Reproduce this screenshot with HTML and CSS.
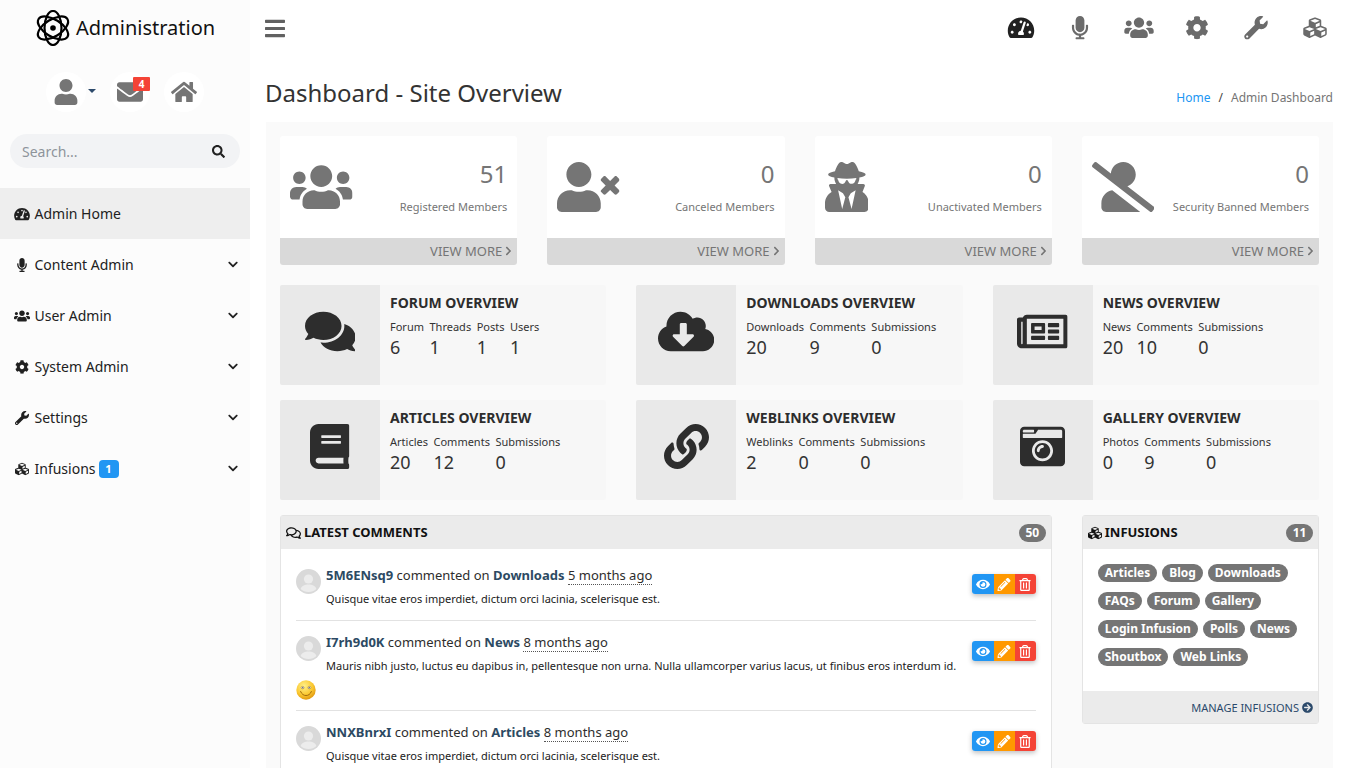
FILE: index.html
```html
<!DOCTYPE html>
<html lang="en">
<head>
<meta charset="utf-8">
<title>Administration</title>
<link rel="stylesheet" href="styles.css">
</head>
<body>
<svg class="sprite" xmlns="http://www.w3.org/2000/svg">
<defs>
<symbol id="i-bars" viewBox="0 0 448 512"><path d="M16 132h416c8.837 0 16-7.163 16-16V76c0-8.837-7.163-16-16-16H16C7.163 60 0 67.163 0 76v40c0 8.837 7.163 16 16 16zm0 160h416c8.837 0 16-7.163 16-16v-40c0-8.837-7.163-16-16-16H16c-8.837 0-16 7.163-16 16v40c0 8.837 7.163 16 16 16zm0 160h416c8.837 0 16-7.163 16-16v-40c0-8.837-7.163-16-16-16H16c-8.837 0-16 7.163-16 16v40c0 8.837 7.163 16 16 16z"/></symbol>
<symbol id="i-user" viewBox="0 0 448 512"><path d="M224 256c70.7 0 128-57.3 128-128S294.7 0 224 0 96 57.3 96 128s57.3 128 128 128zm89.6 32h-16.7c-22.2 10.2-46.9 16-72.9 16s-50.6-5.8-72.9-16h-16.7C60.2 288 0 348.2 0 422.4V464c0 26.5 21.5 48 48 48h352c26.5 0 48-21.5 48-48v-41.6c0-74.2-60.2-134.4-134.4-134.4z"/></symbol>
<symbol id="i-envelope" viewBox="0 0 512 512"><path d="M502.3 190.8c3.9-3.1 9.7-.2 9.7 4.7V400c0 26.5-21.5 48-48 48H48c-26.5 0-48-21.5-48-48V195.6c0-5 5.7-7.8 9.7-4.7 22.4 17.4 52.1 39.5 154.1 113.6 21.1 15.4 56.7 47.8 92.2 47.6 35.7.3 72-32.8 92.3-47.6 102-74.1 131.6-96.3 154-113.7zM256 320c23.2.4 56.6-29.2 73.4-41.4 132.7-96.3 142.8-104.7 173.4-128.7 5.8-4.5 9.2-11.5 9.2-18.9v-19c0-26.5-21.5-48-48-48H48C21.5 64 0 85.5 0 112v19c0 7.4 3.4 14.3 9.2 18.9 30.6 23.9 40.7 32.4 173.4 128.7 16.8 12.2 50.2 41.8 73.4 41.4z"/></symbol>
<symbol id="i-home" viewBox="0 0 576 512"><path d="M280.37 148.26L96 300.11V464a16 16 0 0 0 16 16l112.06-.29a16 16 0 0 0 15.92-16V368a16 16 0 0 1 16-16h64a16 16 0 0 1 16 16v95.64a16 16 0 0 0 16 16.05L464 480a16 16 0 0 0 16-16V300L295.67 148.26a12.19 12.19 0 0 0-15.3 0zM571.6 251.47L488 182.56V44.05a12 12 0 0 0-12-12h-56a12 12 0 0 0-12 12v72.61L318.47 43a48 48 0 0 0-61 0L4.34 251.47a12 12 0 0 0-1.6 16.9l25.5 31A12 12 0 0 0 45.15 301l235.22-193.74a12.19 12.19 0 0 1 15.3 0L530.9 301a12 12 0 0 0 16.9-1.6l25.5-31a12 12 0 0 0-1.7-16.93z"/></symbol>
<symbol id="i-search" viewBox="0 0 512 512"><path d="M505 442.7L405.3 343c-4.5-4.5-10.6-7-17-7H372c27.6-35.3 44-79.7 44-128C416 93.1 322.9 0 208 0S0 93.1 0 208s93.1 208 208 208c48.3 0 92.7-16.4 128-44v16.3c0 6.4 2.5 12.5 7 17l99.7 99.7c9.4 9.4 24.6 9.4 33.9 0l28.3-28.3c9.4-9.4 9.4-24.6.1-34zM208 336c-70.7 0-128-57.2-128-128 0-70.7 57.2-128 128-128 70.7 0 128 57.2 128 128 0 70.7-57.2 128-128 128z"/></symbol>
<symbol id="i-tach" viewBox="0 0 576 512"><path d="M288 32C128.94 32 0 160.94 0 320c0 52.8 14.25 102.26 39.06 144.8 5.61 9.62 16.3 15.2 27.44 15.2h443c11.14 0 21.83-5.58 27.44-15.2C561.75 422.26 576 372.8 576 320c0-159.06-128.94-288-288-288zm0 64c14.71 0 26.58 10.13 30.32 23.65-1.11 2.26-2.64 4.23-3.45 6.67l-9.22 27.67c-5.13 3.49-10.97 6.01-17.64 6.01-17.67 0-32-14.33-32-32S270.33 96 288 96zM96 384c-17.67 0-32-14.33-32-32s14.33-32 32-32 32 14.33 32 32-14.33 32-32 32zm48-160c-17.67 0-32-14.33-32-32s14.33-32 32-32 32 14.33 32 32-14.33 32-32 32zm246.77-72.41l-61.33 184C343.13 347.33 352 364.54 352 384c0 11.72-3.38 22.55-8.88 32H232.88c-5.5-9.45-8.88-20.28-8.88-32 0-33.94 26.5-61.43 59.9-63.59l61.34-184.01c4.17-12.56 17.73-19.45 30.36-15.17 12.57 4.19 19.35 17.79 15.17 30.36zm14.66 57.2l15.52-46.55c3.47-1.29 7.13-2.23 11.05-2.23 17.67 0 32 14.33 32 32s-14.33 32-32 32c-11.38-.01-20.89-6.28-26.57-15.22zM480 384c-17.67 0-32-14.33-32-32s14.33-32 32-32 32 14.33 32 32-14.33 32-32 32z"/></symbol>
<symbol id="i-mic" viewBox="0 0 352 512"><path d="M176 352c53.02 0 96-42.98 96-96V96c0-53.02-42.98-96-96-96S80 42.98 80 96v160c0 53.02 42.98 96 96 96zm160-160h-16c-8.84 0-16 7.16-16 16v48c0 74.8-64.49 134.82-140.79 127.38C96.71 376.89 48 317.11 48 250.3V208c0-8.84-7.16-16-16-16H16c-8.84 0-16 7.16-16 16v40.16c0 89.64 63.97 169.55 152 181.69V464H96c-8.84 0-16 7.16-16 16v16c0 8.84 7.16 16 16 16h160c8.84 0 16-7.16 16-16v-16c0-8.84-7.16-16-16-16h-56v-33.77C285.71 418.47 352 344.9 352 256v-48c0-8.84-7.16-16-16-16z"/></symbol>
<symbol id="i-users" viewBox="0 0 640 512"><path d="M96 224c35.3 0 64-28.7 64-64s-28.7-64-64-64-64 28.7-64 64 28.7 64 64 64zm448 0c35.3 0 64-28.7 64-64s-28.7-64-64-64-64 28.7-64 64 28.7 64 64 64zm32 32h-64c-17.6 0-33.5 7.1-45.1 18.6 40.3 22.1 68.9 62 75.1 109.4h66c17.7 0 32-14.3 32-32v-32c0-35.3-28.7-64-64-64zm-256 0c61.9 0 112-50.1 112-112S381.9 32 320 32 208 82.1 208 144s50.1 112 112 112zm76.8 32h-8.3c-20.8 10-43.9 16-68.5 16s-47.6-6-68.5-16h-8.3C179.6 288 128 339.6 128 403.2V432c0 26.5 21.5 48 48 48h288c26.5 0 48-21.5 48-48v-28.8c0-63.6-51.6-115.2-115.2-115.2zm-223.7-13.4C161.5 263.1 145.6 256 128 256H64c-35.3 0-64 28.7-64 64v32c0 17.7 14.3 32 32 32h65.9c6.3-47.4 34.9-87.3 75.2-109.4z"/></symbol>
<symbol id="i-cog" viewBox="0 0 512 512"><path d="M487.4 315.7l-42.6-24.6c4.3-23.2 4.3-47 0-70.2l42.6-24.6c4.9-2.8 7.1-8.6 5.5-14-11.1-35.6-30-67.8-54.7-94.6-3.8-4.1-10-5.1-14.8-2.3L380.8 110c-17.9-15.4-38.5-27.3-60.8-35.1V25.8c0-5.6-3.9-10.5-9.4-11.7-36.7-8.2-74.3-7.8-109.2 0-5.5 1.2-9.4 6.1-9.4 11.7V75c-22.2 7.9-42.8 19.8-60.8 35.1L88.7 85.5c-4.9-2.8-11-1.9-14.8 2.3-24.7 26.7-43.6 58.9-54.7 94.6-1.7 5.4.6 11.2 5.5 14L67.3 221c-4.3 23.2-4.3 47 0 70.2l-42.6 24.6c-4.9 2.8-7.1 8.6-5.5 14 11.1 35.6 30 67.8 54.7 94.6 3.8 4.1 10 5.1 14.8 2.3l42.6-24.6c17.9 15.4 38.5 27.3 60.8 35.1v49.2c0 5.6 3.9 10.5 9.4 11.7 36.7 8.2 74.3 7.8 109.2 0 5.5-1.2 9.4-6.1 9.4-11.7v-49.2c22.2-7.9 42.8-19.8 60.8-35.1l42.6 24.6c4.9 2.8 11 1.9 14.8-2.3 24.7-26.7 43.6-58.9 54.7-94.6 1.5-5.5-.7-11.3-5.6-14.1zM256 336c-44.1 0-80-35.9-80-80s35.9-80 80-80 80 35.9 80 80-35.9 80-80 80z"/></symbol>
<symbol id="i-wrench" viewBox="0 0 512 512"><path d="M507.73 109.1c-2.24-9.03-13.54-12.09-20.12-5.51l-74.36 74.36-67.88-11.31-11.31-67.88 74.36-74.36c6.62-6.62 3.43-17.9-5.66-20.16-47.38-11.74-99.55.91-136.58 37.93-39.64 39.64-50.55 97.1-34.05 147.2L18.74 402.76c-24.99 24.99-24.99 65.51 0 90.5 24.99 24.99 65.51 24.99 90.5 0l213.21-213.21c50.12 16.71 107.47 5.68 147.37-34.22 37.07-37.07 49.7-89.32 37.91-136.73zM64 472c-13.25 0-24-10.75-24-24 0-13.26 10.75-24 24-24s24 10.74 24 24c0 13.25-10.75 24-24 24z"/></symbol>
<symbol id="i-cubes" viewBox="0 0 512 512"><path d="M488.6 250.2L392 214V105.5c0-15-9.3-28.4-23.4-33.7l-100-37.5c-8.1-3.1-17.1-3.1-25.3 0l-100 37.5c-14.1 5.3-23.4 18.7-23.4 33.7V214l-96.6 36.2C9.3 255.5 0 268.9 0 283.9V394c0 13.6 7.7 26.1 19.9 32.2l100 50c10.1 5.1 22.1 5.1 32.2 0l103.9-52 103.9 52c10.1 5.1 22.1 5.1 32.2 0l100-50c12.2-6.1 19.9-18.6 19.9-32.2V283.9c0-15-9.3-28.4-23.4-33.7zM358 214.8l-85 31.9v-68.2l85-37v73.3zM154 104.1l102-38.2 102 38.2v.6l-102 41.4-102-41.4v-.6zm84 291.1l-85 42.5v-79.1l85-38.8v75.4zm0-112l-102 41.4-102-41.4v-.6l102-38.2 102 38.2v.6zm240 112l-85 42.5v-79.1l85-38.8v75.4zm0-112l-102 41.4-102-41.4v-.6l102-38.2 102 38.2v.6z"/></symbol>
<symbol id="i-chev-d" viewBox="0 0 448 512"><path d="M207.029 381.476L12.686 187.132c-9.373-9.373-9.373-24.569 0-33.941l22.667-22.667c9.357-9.357 24.522-9.375 33.901-.04L224 284.505l154.745-154.021c9.379-9.335 24.544-9.317 33.901.04l22.667 22.667c9.373 9.373 9.373 24.569 0 33.941L240.971 381.476c-9.373 9.372-24.569 9.372-33.942 0z"/></symbol>
<symbol id="i-chev-r" viewBox="0 0 320 512"><path d="M285.476 272.971L91.132 467.314c-9.373 9.373-24.569 9.373-33.941 0l-22.667-22.667c-9.357-9.357-9.375-24.522-.04-33.901L188.505 256 34.484 101.255c-9.335-9.379-9.317-24.544.04-33.901l22.667-22.667c9.373-9.373 24.569-9.373 33.941 0L285.475 239.03c9.373 9.372 9.373 24.568.001 33.941z"/></symbol>
<symbol id="i-user-times" viewBox="0 0 640 512"><path d="M589.6 240l45.6-45.6c6.3-6.3 6.3-16.5 0-22.8l-22.8-22.8c-6.3-6.3-16.5-6.3-22.8 0L544 194.4l-45.6-45.6c-6.3-6.3-16.5-6.3-22.8 0l-22.8 22.8c-6.3 6.3-6.3 16.5 0 22.8l45.6 45.6-45.6 45.6c-6.3 6.3-6.3 16.5 0 22.8l22.8 22.8c6.3 6.3 16.5 6.3 22.8 0l45.6-45.6 45.6 45.6c6.3 6.3 16.5 6.3 22.8 0l22.8-22.8c6.3-6.3 6.3-16.5 0-22.8L589.6 240zM224 256c70.7 0 128-57.3 128-128S294.7 0 224 0 96 57.3 96 128s57.3 128 128 128zm89.6 32h-16.7c-22.2 10.2-46.9 16-72.9 16s-50.6-5.8-72.9-16h-16.7C60.2 288 0 348.2 0 422.4V464c0 26.5 21.5 48 48 48h352c26.5 0 48-21.5 48-48v-41.6c0-74.2-60.2-134.4-134.4-134.4z"/></symbol>
<symbol id="i-user-secret" viewBox="0 0 448 512"><path d="M383.9 308.3l23.9-62.6c4-10.5-3.7-21.7-15-21.7h-58.5c11-18.9 17.8-40.6 17.8-64v-.3c39.2-7.8 64-19.1 64-31.7 0-13.3-27.3-25.1-70.1-33-9.2-32.8-27-65.8-40.6-82.8-9.5-11.9-25.9-15.6-39.5-8.8l-27.6 13.8c-9 4.5-19.6 4.5-28.6 0L182.1 3.4c-13.6-6.8-30-3.1-39.5 8.8-13.5 17-31.4 50-40.6 82.8-42.7 7.9-70 19.7-70 33 0 12.6 24.8 23.9 64 31.7v.3c0 23.4 6.8 45.1 17.8 64H56.3c-11.5 0-19.2 11.7-14.7 22.3l25.8 60.2C27.3 329.8 0 372.7 0 422.4v44.8C0 491.9 20.1 512 44.8 512h358.4c24.7 0 44.8-20.1 44.8-44.8v-44.8c0-48.4-25.8-90.4-64.1-114.1zM176 480l-41.6-192 49.6 32 24 40-32 120zm96 0l-32-120 24-40 49.6-32L272 480zm41.7-298.5c-3.9 11.9-7 24.6-16.5 33.4-10.1 9.3-48 22.4-64-25-2.8-8.4-15.4-8.4-18.3 0-17 50.2-56 32.4-64 25-9.5-8.8-12.7-21.5-16.5-33.4-.8-2.5-6.3-5.7-6.3-5.8v-10.8c28.3 3.6 61 5.8 96 5.8s67.7-2.1 96-5.8v10.8c-.1.1-5.6 3.2-6.4 5.8z"/></symbol>
<symbol id="i-user-slash" viewBox="0 0 640 512"><path d="M633.8 458.1L362.3 248.3C412.1 230.7 448 183.8 448 128 448 57.3 390.7 0 320 0c-67.1 0-121.5 51.8-126.9 117.4L45.5 3.4C38.5-2 28.5-.8 23 6.2L3.4 31.4c-5.4 7-4.2 17 2.8 22.4l588.4 454.7c7 5.4 17 4.2 22.5-2.8l19.6-25.3c5.4-6.8 4.1-16.9-2.9-22.3zM96 422.4V464c0 26.5 21.5 48 48 48h350.2L207.4 290.3C144.2 301.3 96 356 96 422.4z"/></symbol>
<symbol id="i-comments" viewBox="0 0 576 512"><path d="M416 192c0-88.4-93.1-160-208-160S0 103.6 0 192c0 34.3 14.1 65.9 38 92-13.4 30.2-35.5 54.2-35.8 54.5-2.2 2.3-2.8 5.7-1.5 8.7S4.8 352 8 352c36.6 0 66.9-12.3 88.7-25 32.2 15.7 70.3 25 111.3 25 114.9 0 208-71.6 208-160zm122 220c23.9-26 38-57.7 38-92 0-66.9-53.5-124.2-129.3-148.1.9 6.6 1.3 13.3 1.3 20.1 0 105.9-107.7 192-240 192-10.8 0-21.3-.8-31.7-1.9C207.8 439.6 281.8 480 368 480c41 0 79.1-9.2 111.3-25 21.8 12.7 52.1 25 88.7 25 3.2 0 6.1-1.9 7.3-4.8 1.3-2.9.7-6.3-1.5-8.7-.3-.3-22.4-24.2-35.8-54.5z"/></symbol>
<symbol id="i-comments-o" viewBox="0 0 576 512"><path d="M532 386.2c27.5-27.1 44-61.1 44-98.2 0-80-76.5-146.1-176.2-157.9C368.3 72.5 294.3 32 208 32 93.1 32 0 103.6 0 192c0 37 16.5 71 44 98.2-15.3 30.7-37.3 54.5-37.7 54.9-6.3 6.7-8.1 16.5-4.4 25 3.6 8.5 12 14 21.2 14 53.5 0 96.7-20.2 125.2-38.8 9.2 2.1 18.7 3.7 28.4 4.9C208.1 407.6 281.8 448 368 448c20.8 0 40.8-2.4 59.8-6.8C456.3 459.7 499.4 480 553 480c9.2 0 17.5-5.5 21.2-14 3.6-8.5 1.9-18.3-4.4-25-.4-.3-22.5-24.1-37.8-54.8zm-392.8-92.3L122.1 305c-14.1 9.1-28.5 16.3-43.1 21.4 2.7-4.7 5.4-9.7 8-14.8l15.5-31.1L77.7 256C64.2 242.6 48 220.7 48 192c0-60.7 73.3-112 160-112s160 51.3 160 112-73.3 112-160 112c-16.5 0-33-1.9-49-5.6l-19.8-4.5zM498.3 352l-24.7 24.4 15.5 31.1c2.6 5.1 5.3 10.1 8 14.8-14.6-5.1-29-12.3-43.1-21.4l-17.1-11.1-19.9 4.6c-16 3.7-32.5 5.6-49 5.6-54 0-102.2-20.1-131.3-49.7C338 339.5 416 272.9 416 192c0-3.4-.4-6.7-.7-10C479.7 196.5 528 238.8 528 288c0 28.7-16.2 50.6-29.7 64z"/></symbol>
<symbol id="i-cloud" viewBox="0 0 640 512"><path d="M537.6 226.6c4.1-10.7 6.4-22.4 6.4-34.6 0-53-43-96-96-96-19.7 0-38.1 6-53.3 16.2C367 64.2 315.3 32 256 32c-88.4 0-160 71.6-160 160 0 2.7.1 5.4.2 8.1C40.2 219.8 0 273.2 0 336c0 79.5 64.5 144 144 144h368c70.7 0 128-57.3 128-128 0-61.9-44-113.6-102.4-125.4zm-132.9 88.7L299.3 420.7c-6.2 6.2-16.4 6.2-22.6 0L171.3 315.3c-10.1-10.1-2.9-27.3 11.3-27.3H248V176c0-8.8 7.2-16 16-16h48c8.8 0 16 7.2 16 16v112h65.4c14.2 0 21.4 17.2 11.3 27.3z"/></symbol>
<symbol id="i-news" viewBox="0 0 576 512"><path d="M552 64H112c-20.858 0-38.643 13.377-45.248 32H24c-13.255 0-24 10.745-24 24v272c0 30.928 25.072 56 56 56h496c13.255 0 24-10.745 24-24V88c0-13.255-10.745-24-24-24zM48 392V144h16v248c0 4.411-3.589 8-8 8s-8-3.589-8-8zm480 8H111.422c.374-2.614.578-5.283.578-8V112h416v288zM172 280h136c6.627 0 12-5.373 12-12v-96c0-6.627-5.373-12-12-12H172c-6.627 0-12 5.373-12 12v96c0 6.627 5.373 12 12 12zm28-80h80v40h-80v-40zm-40 140v-24c0-6.627 5.373-12 12-12h136c6.627 0 12 5.373 12 12v24c0 6.627-5.373 12-12 12H172c-6.627 0-12-5.373-12-12zm192 0v-24c0-6.627 5.373-12 12-12h104c6.627 0 12 5.373 12 12v24c0 6.627-5.373 12-12 12H364c-6.627 0-12-5.373-12-12zm0-144v-24c0-6.627 5.373-12 12-12h104c6.627 0 12 5.373 12 12v24c0 6.627-5.373 12-12 12H364c-6.627 0-12-5.373-12-12zm0 72v-24c0-6.627 5.373-12 12-12h104c6.627 0 12 5.373 12 12v24c0 6.627-5.373 12-12 12H364c-6.627 0-12-5.373-12-12z"/></symbol>
<symbol id="i-book" viewBox="0 0 448 512"><path d="M448 360V24c0-13.3-10.7-24-24-24H96C43 0 0 43 0 96v320c0 53 43 96 96 96h328c13.3 0 24-10.7 24-24v-16c0-7.5-3.5-14.3-8.9-18.7-4.2-15.4-4.2-59.3 0-74.7 5.4-4.3 8.9-11.1 8.9-18.6zM128 134c0-3.3 2.7-6 6-6h212c3.3 0 6 2.7 6 6v20c0 3.3-2.7 6-6 6H134c-3.3 0-6-2.7-6-6v-20zm0 64c0-3.3 2.7-6 6-6h212c3.3 0 6 2.7 6 6v20c0 3.3-2.7 6-6 6H134c-3.3 0-6-2.7-6-6v-20zm253.4 250H96c-17.7 0-32-14.3-32-32 0-17.6 14.4-32 32-32h285.4c-1.9 17.1-1.9 46.9 0 64z"/></symbol>
<symbol id="i-link" viewBox="0 0 512 512"><path d="M326.612 185.391c59.747 59.809 58.927 155.698.36 214.59-.11.12-.24.25-.36.37l-67.2 67.2c-59.27 59.27-155.699 59.262-214.96 0-59.27-59.26-59.27-155.7 0-214.96l37.106-37.106c9.84-9.84 26.786-3.3 27.294 10.606.648 17.722 3.826 35.527 9.69 52.721 1.986 5.822.567 12.262-3.783 16.612l-13.087 13.087c-28.026 28.026-28.905 73.66-1.155 101.96 28.024 28.579 74.086 28.749 102.325.51l67.2-67.19c28.191-28.191 28.073-73.757 0-101.83-3.701-3.694-7.429-6.564-10.341-8.569a16.037 16.037 0 0 1-6.947-12.606c-.396-10.567 3.348-21.456 11.698-29.806l21.054-21.055c5.521-5.521 14.182-6.199 20.584-1.731a152.482 152.482 0 0 1 20.522 17.197zM467.547 44.449c-59.261-59.262-155.69-59.27-214.96 0l-67.2 67.2c-.12.12-.25.25-.36.37-58.566 58.892-59.387 154.781.36 214.59a152.454 152.454 0 0 0 20.521 17.196c6.402 4.468 15.064 3.789 20.584-1.731l21.054-21.055c8.35-8.35 12.094-19.239 11.698-29.806a16.037 16.037 0 0 0-6.947-12.606c-2.912-2.005-6.64-4.875-10.341-8.569-28.073-28.073-28.191-73.639 0-101.83l67.2-67.19c28.239-28.239 74.3-28.069 102.325.51 27.75 28.3 26.872 73.934-1.155 101.96l-13.087 13.087c-4.35 4.35-5.769 10.79-3.783 16.612 5.864 17.194 9.042 34.999 9.69 52.721.509 13.906 17.454 20.446 27.294 10.606l37.106-37.106c59.271-59.259 59.271-155.699.001-214.959z"/></symbol>
<symbol id="i-camera" viewBox="0 0 512 512"><path d="M48 32C21.5 32 0 53.5 0 80v352c0 26.5 21.5 48 48 48h416c26.5 0 48-21.5 48-48V80c0-26.5-21.5-48-48-48H48zm0 32h106c3.3 0 6 2.7 6 6v20c0 3.3-2.7 6-6 6H38c-3.3 0-6-2.7-6-6V80c0-8.8 7.2-16 16-16zm426 96H38c-3.3 0-6-2.7-6-6v-36c0-3.3 2.7-6 6-6h138l30.2-45.3c1.1-1.7 3-2.7 5-2.7H464c8.8 0 16 7.2 16 16v74c0 3.3-2.7 6-6 6zM256 424c-66.2 0-120-53.8-120-120s53.8-120 120-120 120 53.8 120 120-53.8 120-120 120zm0-208c-48.5 0-88 39.5-88 88s39.5 88 88 88 88-39.5 88-88-39.5-88-88-88zm-48 104c-8.8 0-16-7.2-16-16 0-35.3 28.7-64 64-64 8.8 0 16 7.2 16 16s-7.2 16-16 16c-17.6 0-32 14.4-32 32 0 8.8-7.2 16-16 16z"/></symbol>
<symbol id="i-eye" viewBox="0 0 576 512"><path d="M572.52 241.4C518.29 135.59 410.93 64 288 64S57.68 135.64 3.48 241.41a32.35 32.35 0 0 0 0 29.19C57.71 376.41 165.07 448 288 448s230.32-71.64 284.52-177.41a32.35 32.35 0 0 0 0-29.19zM288 400a144 144 0 1 1 144-144 143.93 143.93 0 0 1-144 144zm0-240a95.31 95.31 0 0 0-25.31 3.79 47.85 47.85 0 0 1-66.9 66.9A95.78 95.78 0 1 0 288 160z"/></symbol>
<symbol id="i-pencil" viewBox="0 0 512 512"><path d="M497.9 142.1l-46.1 46.1c-4.7 4.7-12.3 4.7-17 0l-111-111c-4.7-4.7-4.7-12.3 0-17l46.1-46.1c18.7-18.7 49.1-18.7 67.9 0l60.1 60.1c18.8 18.7 18.8 49.1 0 67.9zM284.2 99.8L21.6 362.4.4 483.9c-2.9 16.4 11.4 30.6 27.8 27.8l121.5-21.3 262.6-262.6c4.7-4.7 4.7-12.3 0-17l-111-111c-4.8-4.7-12.4-4.7-17.1 0zM124.1 339.9c-5.5-5.5-5.5-14.3 0-19.8l154-154c5.5-5.5 14.3-5.5 19.8 0s5.5 14.3 0 19.8l-154 154c-5.5 5.5-14.3 5.5-19.8 0zM88 424h48v36.3l-64.5 11.3-31.1-31.1L51.7 376H88v48z"/></symbol>
<symbol id="i-trash" viewBox="0 0 448 512"><path d="M268 416h24a12 12 0 0 0 12-12V188a12 12 0 0 0-12-12h-24a12 12 0 0 0-12 12v216a12 12 0 0 0 12 12zM432 80h-82.41l-34-56.7A48 48 0 0 0 274.41 0H173.59a48 48 0 0 0-41.16 23.3L98.41 80H16A16 16 0 0 0 0 96v16a16 16 0 0 0 16 16h16v336a48 48 0 0 0 48 48h288a48 48 0 0 0 48-48V128h16a16 16 0 0 0 16-16V96a16 16 0 0 0-16-16zM171.84 50.91A6 6 0 0 1 177 48h94a6 6 0 0 1 5.15 2.91L293.61 80H154.39zM368 464H80V128h288zm-212-48h24a12 12 0 0 0 12-12V188a12 12 0 0 0-12-12h-24a12 12 0 0 0-12 12v216a12 12 0 0 0 12 12z"/></symbol>
<symbol id="i-arrow" viewBox="0 0 512 512"><path d="M256 8c137 0 248 111 248 248S393 504 256 504 8 393 8 256 119 8 256 8zm-28.9 143.6l75.5 72.4H120c-13.3 0-24 10.7-24 24v16c0 13.3 10.7 24 24 24h182.6l-75.5 72.4c-9.7 9.3-9.9 24.8-.4 34.3l11 10.9c9.4 9.4 24.6 9.4 33.9 0L404.3 273c9.4-9.4 9.4-24.6 0-33.9L271.6 106.3c-9.4-9.4-24.6-9.4-33.9 0l-11 10.9c-9.5 9.6-9.3 25.1.4 34.4z"/></symbol>
<symbol id="i-avatar" viewBox="0 0 25 25"><circle cx="12.5" cy="12.5" r="12.5" fill="#d9d9d9"/><circle cx="12.5" cy="10" r="4.6" fill="#ececec"/><path d="M4.6 20c1.2-3.2 4.5-4.4 7.9-4.4s6.7 1.2 7.9 4.4c-2 2-4.8 3-7.9 3s-5.9-1-7.9-3z" fill="#ececec"/></symbol>
<radialGradient id="smile-g" cx="0.4" cy="0.3" r="0.8"><stop offset="0" stop-color="#fff08a"/><stop offset="0.55" stop-color="#fbc932"/><stop offset="1" stop-color="#d98a06"/></radialGradient>
<symbol id="i-smile" viewBox="0 0 20 20"><circle cx="10" cy="10" r="9.7" fill="url(#smile-g)"/><ellipse cx="6.6" cy="7.6" rx="1.5" ry="1.2" fill="#fff" stroke="#8a6a1a" stroke-width=".5"/><ellipse cx="13.4" cy="7.6" rx="1.5" ry="1.2" fill="#fff" stroke="#8a6a1a" stroke-width=".5"/><circle cx="6.8" cy="7.7" r=".6" fill="#335"/><circle cx="13.2" cy="7.7" r=".6" fill="#335"/><path d="M4.6 11.5c1.2 3 3.3 4 5.4 4s4.2-1 5.4-4" fill="none" stroke="#9a6208" stroke-width=".9" stroke-linecap="round"/></symbol>
</defs>
</svg>

<div class="app">
  <aside class="sidebar">
    <div class="brand">
      <svg class="brand-logo" viewBox="0 0 36 36">
        <ellipse cx="18" cy="18" rx="17" ry="8.5" transform="rotate(32 18 18)"/>
        <ellipse cx="18" cy="18" rx="17" ry="8.5" transform="rotate(-32 18 18)"/>
        <ellipse cx="18" cy="18" rx="17" ry="8.5" transform="rotate(90 18 18)"/>
        <circle class="nucleus" cx="18" cy="18" r="2.8"/>
      </svg>
      <span class="brand-name">Administration</span>
    </div>
    <div class="quick">
      <a class="quick-btn"><svg class="quick-ico"><use href="#i-user"/></svg></a>
      <span class="caret"></span>
      <a class="quick-btn quick-mail"><svg class="quick-ico"><use href="#i-envelope"/></svg><span class="mail-badge">4</span></a>
      <a class="quick-btn quick-home"><svg class="quick-ico"><use href="#i-home"/></svg></a>
    </div>
    <div class="search">
      <span class="search-text">Search...</span>
      <svg class="search-ico"><use href="#i-search"/></svg>
    </div>
    <nav class="menu">
      <a class="menu-item active"><svg class="menu-ico"><use href="#i-tach"/></svg><span>Admin Home</span></a>
      <a class="menu-item"><svg class="menu-ico"><use href="#i-mic"/></svg><span>Content Admin</span><svg class="menu-chev"><use href="#i-chev-d"/></svg></a>
      <a class="menu-item"><svg class="menu-ico"><use href="#i-users"/></svg><span>User Admin</span><svg class="menu-chev"><use href="#i-chev-d"/></svg></a>
      <a class="menu-item"><svg class="menu-ico"><use href="#i-cog"/></svg><span>System Admin</span><svg class="menu-chev"><use href="#i-chev-d"/></svg></a>
      <a class="menu-item"><svg class="menu-ico"><use href="#i-wrench"/></svg><span>Settings</span><svg class="menu-chev"><use href="#i-chev-d"/></svg></a>
      <a class="menu-item"><svg class="menu-ico"><use href="#i-cubes"/></svg><span>Infusions</span><span class="menu-badge">1</span><svg class="menu-chev"><use href="#i-chev-d"/></svg></a>
    </nav>
  </aside>

  <main class="main">
    <header class="topbar">
      <svg class="top-bars"><use href="#i-bars"/></svg>
      <div class="top-icons">
        <a class="top-icon dark"><svg><use href="#i-tach"/></svg></a>
        <a class="top-icon"><svg><use href="#i-mic"/></svg></a>
        <a class="top-icon"><svg><use href="#i-users"/></svg></a>
        <a class="top-icon"><svg><use href="#i-cog"/></svg></a>
        <a class="top-icon"><svg><use href="#i-wrench"/></svg></a>
        <a class="top-icon"><svg><use href="#i-cubes"/></svg></a>
      </div>
    </header>
    <div class="title-row">
      <h1 class="page-title">Dashboard - Site Overview</h1>
      <div class="crumbs"><a class="crumb-link">Home</a><span class="crumb-sep">/</span><span>Admin Dashboard</span></div>
    </div>

    <div class="content">
      <section class="stats">
        <div class="stat">
          <div class="stat-body"><svg class="stat-ico w640"><use href="#i-users"/></svg><div class="stat-text"><div class="stat-num">51</div><div class="stat-label">Registered Members</div></div></div>
          <a class="stat-foot">VIEW MORE<svg class="chev-r"><use href="#i-chev-r"/></svg></a>
        </div>
        <div class="stat">
          <div class="stat-body"><svg class="stat-ico w640"><use href="#i-user-times"/></svg><div class="stat-text"><div class="stat-num">0</div><div class="stat-label">Canceled Members</div></div></div>
          <a class="stat-foot">VIEW MORE<svg class="chev-r"><use href="#i-chev-r"/></svg></a>
        </div>
        <div class="stat">
          <div class="stat-body"><svg class="stat-ico w448"><use href="#i-user-secret"/></svg><div class="stat-text"><div class="stat-num">0</div><div class="stat-label">Unactivated Members</div></div></div>
          <a class="stat-foot">VIEW MORE<svg class="chev-r"><use href="#i-chev-r"/></svg></a>
        </div>
        <div class="stat">
          <div class="stat-body"><svg class="stat-ico w640"><use href="#i-user-slash"/></svg><div class="stat-text"><div class="stat-num">0</div><div class="stat-label">Security Banned Members</div></div></div>
          <a class="stat-foot">VIEW MORE<svg class="chev-r"><use href="#i-chev-r"/></svg></a>
        </div>
      </section>

      <section class="overviews">
        <div class="ov">
          <div class="ov-ico"><svg class="w576"><use href="#i-comments"/></svg></div>
          <div class="ov-body"><h3 class="ov-title">FORUM OVERVIEW</h3><div class="ov-cols">
            <div><small>Forum</small><b>6</b></div><div><small>Threads</small><b>1</b></div><div><small>Posts</small><b>1</b></div><div><small>Users</small><b>1</b></div></div></div>
        </div>
        <div class="ov">
          <div class="ov-ico"><svg class="w640"><use href="#i-cloud"/></svg></div>
          <div class="ov-body"><h3 class="ov-title">DOWNLOADS OVERVIEW</h3><div class="ov-cols">
            <div><small>Downloads</small><b>20</b></div><div><small>Comments</small><b>9</b></div><div><small>Submissions</small><b>0</b></div></div></div>
        </div>
        <div class="ov">
          <div class="ov-ico"><svg class="w576"><use href="#i-news"/></svg></div>
          <div class="ov-body"><h3 class="ov-title">NEWS OVERVIEW</h3><div class="ov-cols">
            <div><small>News</small><b>20</b></div><div><small>Comments</small><b>10</b></div><div><small>Submissions</small><b>0</b></div></div></div>
        </div>
        <div class="ov">
          <div class="ov-ico"><svg class="w448"><use href="#i-book"/></svg></div>
          <div class="ov-body"><h3 class="ov-title">ARTICLES OVERVIEW</h3><div class="ov-cols">
            <div><small>Articles</small><b>20</b></div><div><small>Comments</small><b>12</b></div><div><small>Submissions</small><b>0</b></div></div></div>
        </div>
        <div class="ov">
          <div class="ov-ico"><svg class="w512"><use href="#i-link"/></svg></div>
          <div class="ov-body"><h3 class="ov-title">WEBLINKS OVERVIEW</h3><div class="ov-cols">
            <div><small>Weblinks</small><b>2</b></div><div><small>Comments</small><b>0</b></div><div><small>Submissions</small><b>0</b></div></div></div>
        </div>
        <div class="ov">
          <div class="ov-ico"><svg class="w512"><use href="#i-camera"/></svg></div>
          <div class="ov-body"><h3 class="ov-title">GALLERY OVERVIEW</h3><div class="ov-cols">
            <div><small>Photos</small><b>0</b></div><div><small>Comments</small><b>9</b></div><div><small>Submissions</small><b>0</b></div></div></div>
        </div>
      </section>

      <section class="panels">
        <div class="panel">
          <div class="panel-head"><svg class="head-ico comm"><use href="#i-comments-o"/></svg><strong>LATEST COMMENTS</strong><span class="count">50</span></div>
          <div class="comments">
            <article class="comment">
              <svg class="avatar"><use href="#i-avatar"/></svg>
              <div class="actions"><a class="act blue"><svg><use href="#i-eye"/></svg></a><a class="act orange"><svg><use href="#i-pencil"/></svg></a><a class="act red"><svg><use href="#i-trash"/></svg></a></div>
              <div class="c-line"><a class="c-link">5M6ENsq9</a> commented on <a class="c-link">Downloads</a> <span class="c-time">5 months ago</span></div>
              <p class="c-text">Quisque vitae eros imperdiet, dictum orci lacinia, scelerisque est.</p>
            </article>
            <article class="comment">
              <svg class="avatar"><use href="#i-avatar"/></svg>
              <div class="actions"><a class="act blue"><svg><use href="#i-eye"/></svg></a><a class="act orange"><svg><use href="#i-pencil"/></svg></a><a class="act red"><svg><use href="#i-trash"/></svg></a></div>
              <div class="c-line"><a class="c-link">I7rh9d0K</a> commented on <a class="c-link">News</a> <span class="c-time">8 months ago</span></div>
              <p class="c-text">Mauris nibh justo, luctus eu dapibus in, pellentesque non urna. Nulla ullamcorper varius lacus, ut finibus eros interdum id.</p>
              <svg class="smile"><use href="#i-smile"/></svg>
            </article>
            <article class="comment">
              <svg class="avatar"><use href="#i-avatar"/></svg>
              <div class="actions"><a class="act blue"><svg><use href="#i-eye"/></svg></a><a class="act orange"><svg><use href="#i-pencil"/></svg></a><a class="act red"><svg><use href="#i-trash"/></svg></a></div>
              <div class="c-line"><a class="c-link">NNXBnrxI</a> commented on <a class="c-link">Articles</a> <span class="c-time">8 months ago</span></div>
              <p class="c-text">Quisque vitae eros imperdiet, dictum orci lacinia, scelerisque est.</p>
            </article>
          </div>
        </div>
        <div class="panel panel-side">
          <div class="panel-head"><svg class="head-ico"><use href="#i-cubes"/></svg><strong>INFUSIONS</strong><span class="count">11</span></div>
          <div class="tags">
            <span class="tag">Articles</span><span class="tag">Blog</span><span class="tag">Downloads</span><span class="tag">FAQs</span><span class="tag">Forum</span><span class="tag">Gallery</span><span class="tag">Login Infusion</span><span class="tag">Polls</span><span class="tag">News</span><span class="tag">Shoutbox</span><span class="tag">Web Links</span>
          </div>
          <a class="panel-foot">MANAGE INFUSIONS<svg class="foot-ico"><use href="#i-arrow"/></svg></a>
        </div>
      </section>
    </div>
  </main>
</div>
</body>
</html>
```

FILE: styles.css
```css
* { box-sizing: border-box; }
html, body { margin: 0; height: 768px; overflow: hidden; }
body { font-family: "Noto Sans", "Open Sans", sans-serif; font-size: 14px; color: #212121; background: #fff; }
svg { fill: currentColor; display: block; }
.sprite { position: absolute; width: 0; height: 0; }

.app { display: flex; height: 768px; }

.sidebar { width: 250px; flex: none; background: #fcfcfc; }
.brand { display: flex; align-items: center; height: 56px; padding-left: 35px; }
.brand-logo { width: 36px; height: 36px; flex: none; fill: none; stroke: #000; stroke-width: 2.2; }
.brand-logo .nucleus { fill: #000; stroke: none; }
.brand-name { font-size: 20px; margin-left: 5px; padding-bottom: 2px; color: #111; }

.quick { display: flex; align-items: center; height: 40px; margin-top: 16px; padding-left: 46px; }
.quick-btn { position: relative; width: 40px; height: 40px; border-radius: 50%; background: #fff; color: #757575; display: flex; align-items: center; justify-content: center; }
.quick-ico { width: 26px; height: 26px; }
.caret { width: 0; height: 0; margin: 0 0 2px 2px; border: 4px solid transparent; border-top-color: #2c4a6b; border-bottom: 0; }
.quick-mail { margin-left: 14px; }
.quick-home { margin-left: 14px; }
.mail-badge { position: absolute; top: 5px; left: 23px; width: 17px; height: 14px; background: #f44336; color: #fff; font-size: 10px; font-weight: 700; line-height: 14px; text-align: center; border-radius: 1px; }

.search { display: flex; align-items: center; justify-content: space-between; height: 34px; margin: 22px 10px 20px; padding: 0 15px 0 12px; border-radius: 17px; background: #f2f3f5; }
.search-text { font-size: 14px; color: #8e949b; }
.search-ico { width: 13px; height: 13px; color: #212121; }

.menu-item { display: flex; align-items: center; height: 51px; padding: 0 12px 0 14px; color: #212121; }
.menu-item.active { background: #eee; }
.menu-ico { width: 16px; height: 14px; flex: none; margin-right: 4.5px; }
.menu-chev { width: 10px; height: 11px; margin-left: auto; margin-right: .5px; color: #212121; }
.menu-badge { margin-left: 3px; width: 20px; height: 18px; line-height: 18px; text-align: center; border-radius: 4px; background: #2196f3; color: #fff; font-size: 11px; font-weight: 700; }

.main { flex: 1; min-width: 0; }
.topbar { display: flex; align-items: center; justify-content: space-between; height: 56px; padding: 0 4px 0 15px; }
.top-bars { width: 20px; height: 23px; color: #616161; }
.top-icons { display: flex; }
.top-icon { width: 58.7px; display: flex; justify-content: center; color: #6b6b6b; }
.top-icon svg { width: 30px; height: 23.5px; }
.top-icon.dark { color: #212121; }

.title-row { display: flex; align-items: flex-end; justify-content: space-between; height: 66px; padding: 0 15px 13px 15px; }
.page-title { margin: 0; font-size: 24px; font-weight: 400; line-height: 32px; color: #333; }
.crumbs { font-size: 12px; line-height: 18px; color: #757575; display: flex; margin-bottom: 2px; }
.crumb-link { color: #2196f3; }
.crumb-sep { margin: 0 8px; color: #444; }

.content { margin: 0 15px 0 16px; height: 646px; padding: 14px 14px 0; background: #fafafa; }

.stats { display: grid; grid-template-columns: repeat(4, 1fr); gap: 30px; }
.stat { background: #fff; border-radius: 3px; overflow: hidden; }
.stat-body { display: flex; justify-content: space-between; height: 102px; padding: 26px 10px 0; color: #757575; }
.stat-ico { height: 50px; flex: none; }
.w640 { width: 62.5px; }
.w448 { width: 43.75px; }
.stat-text { text-align: right; margin-top: -1px; }
.stat-num { font-size: 24px; line-height: 26px; }
.stat-label { font-size: 11px; line-height: 16px; margin-top: 12px; }
.stat-foot { display: flex; align-items: center; justify-content: flex-end; height: 27px; padding: 0 5px 2px 0; background: #d9d9d9; color: #757575; font-size: 13px; }
.chev-r { width: 7px; height: 10px; margin-left: 3px; }

.overviews { display: grid; grid-template-columns: repeat(3, 1fr); gap: 15px 30px; margin-top: 20px; }
.ov { display: flex; height: 100px; background: #f7f7f7; border-radius: 2px; overflow: hidden; }
.ov-ico { width: 100px; flex: none; background: #e9e9e9; color: #2d2d2d; display: flex; justify-content: center; padding-top: 24px; }
.ov-ico svg { height: 45px; }
.ov-ico .w640 { width: 56.25px; }
.ov-ico .w576 { width: 50.6px; }
.ov-ico .w448 { width: 39.4px; }
.ov-ico .w512 { width: 45px; }
.ov-body { padding: 8px 10px; color: #333; }
.ov-title { margin: 0; font-size: 14px; font-weight: 700; line-height: 20px; color: #2d2d2d; }
.ov-cols { display: flex; gap: 5.5px; margin-top: 6px; }
.ov-cols small { display: block; font-size: 11px; line-height: 16px; }
.ov-cols b { display: block; font-size: 18px; font-weight: 400; line-height: 24px; }

.panels { display: grid; grid-template-columns: 1fr 237.25px; gap: 30px; margin-top: 15px; align-items: start; }
.panel { background: #fff; border: 1px solid #e4e4e4; border-radius: 3px; }
.panel-head { display: flex; align-items: center; height: 33px; padding: 0 5px; background: #ebebeb; font-size: 13px; color: #111; }
.panel-head strong { margin-bottom: 2px; }
.head-ico { width: 14px; height: 14px; margin-right: 3px; flex: none; }
.head-ico.comm { width: 15px; }
.count { margin-left: auto; min-width: 27px; height: 18px; padding: 0 6px; border-radius: 9px; background: #757575; color: #fff; font-size: 12px; font-weight: 700; line-height: 18px; text-align: center; }

.comments { padding: 5px 15px 0; }
.comment { padding: 11px 0 12px; border-bottom: 1px solid #e2e2e2; }
.comment:last-child { border-bottom: 0; }
.comment::after { content: ""; display: block; clear: both; }
.avatar { float: left; width: 25px; height: 25px; margin: 4px 5px 0 0; }
.actions { float: right; display: flex; margin-top: 9px; box-shadow: 0 2px 5px rgba(0,0,0,.25); border-radius: 3px; overflow: hidden; }
.act { display: flex; align-items: center; justify-content: center; width: 21px; height: 20px; color: #fff; }
.act svg { width: 14px; height: 13px; }
.blue { background: #2196f3; width: 22px; }
.orange { background: #ff9800; }
.red { background: #f44336; }
.c-line { font-size: 13px; line-height: 20px; color: #2d2d2d; }
.c-link { font-weight: 700; color: #2c4a63; }
.c-time { border-bottom: 1px dotted #555; }
.c-text { margin: 5px 0 0; font-size: 11px; line-height: 18px; color: #212121; }
.smile { width: 20px; height: 20px; margin: 5px 0 -2px; }

.tags { display: flex; flex-wrap: wrap; align-content: flex-start; gap: 10px 5px; height: 142px; padding: 15px 15px 0; }
.tag { height: 18px; padding: 0 7px; border-radius: 9px; background: #757575; color: #fff; font-size: 12px; font-weight: 700; line-height: 18px; }
.panel-foot { display: flex; align-items: center; justify-content: flex-end; height: 32px; padding-right: 5px; background: #ebebeb; color: #2c4a6b; font-size: 11px; }
.foot-ico { width: 11px; height: 11px; margin-left: 3px; }
```
